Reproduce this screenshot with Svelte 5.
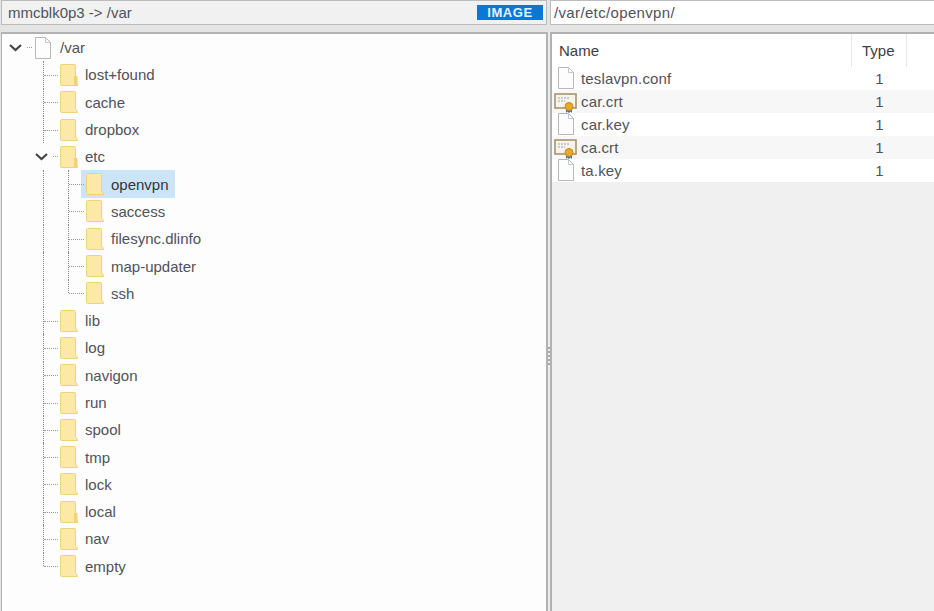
<script lang="ts">
	type Node = { name: string; depth: number; open?: boolean; tab?: boolean; selected?: boolean; last?: boolean; file?: boolean };

	const tree: Node[] = [
		{ name: '/var', depth: 0, open: true, file: true },
		{ name: 'lost+found', depth: 1, tab: true },
		{ name: 'cache', depth: 1 },
		{ name: 'dropbox', depth: 1 },
		{ name: 'etc', depth: 1, open: true, tab: true },
		{ name: 'openvpn', depth: 2, selected: true },
		{ name: 'saccess', depth: 2 },
		{ name: 'filesync.dlinfo', depth: 2 },
		{ name: 'map-updater', depth: 2 },
		{ name: 'ssh', depth: 2, last: true },
		{ name: 'lib', depth: 1 },
		{ name: 'log', depth: 1 },
		{ name: 'navigon', depth: 1 },
		{ name: 'run', depth: 1 },
		{ name: 'spool', depth: 1 },
		{ name: 'tmp', depth: 1 },
		{ name: 'lock', depth: 1 },
		{ name: 'local', depth: 1, tab: true },
		{ name: 'nav', depth: 1 },
		{ name: 'empty', depth: 1, last: true }
	];

	const files = [
		{ name: 'teslavpn.conf', cert: false },
		{ name: 'car.crt', cert: true },
		{ name: 'car.key', cert: false },
		{ name: 'ca.crt', cert: true },
		{ name: 'ta.key', cert: false }
	];
</script>

{#snippet pageIcon()}
	<svg class="page" width="18" height="22" viewBox="0 0 18 22">
		<path d="M1.5 0.5H11.5L16.5 5.5V21.5H1.5Z" fill="#fdfdfd" stroke="#b4b8bd" />
		<path d="M11.5 0.5V5.5H16.5" fill="none" stroke="#c4c7cb" />
	</svg>
{/snippet}

{#snippet chevron()}
	<svg width="15" height="9" viewBox="0 0 15 9"><path d="M2 2L7.5 7L13 2" fill="none" stroke="#444" stroke-width="2.2" /></svg>
{/snippet}

<div class="app">
	<div class="bars">
		<div class="bar">
			<span class="crumb">mmcblk0p3 -&gt; /var</span>
			<span class="badge">IMAGE</span>
		</div>
		<div class="bar path">/var/etc/openvpn/</div>
	</div>

	<div class="panes">
		<div class="tree">
			{#each tree as node}
				<div class="row">
					{#if node.depth === 0}
						<span class="cell chev-root">{@render chevron()}</span>
						<span class="stub"></span>
					{:else}
						{#if node.depth === 2}
							<span class="guide trunk"></span>
						{/if}
						{#if node.open}
							<span class="cell chev-child">{@render chevron()}</span>
							<span class="stub"></span>
						{:else}
							<span class="guide" class:first={node.depth === 1} class:second={node.depth === 2} class:last={node.last}></span>
						{/if}
					{/if}
					<span class="name" class:selected={node.selected}>
						{#if node.file}
							{@render pageIcon()}
						{:else}
							<svg class="folder" width="18" height="22" viewBox="0 0 18 22">
								<path d="M0.5 1.5Q0.5 0.5 1.5 0.5H14.5Q15.5 0.5 15.5 1.5V18Q17.5 19.5 17.5 21.5H1.5Q0.5 21.5 0.5 20.5Z" fill="#fde9a6" stroke="#efd27e" />
								{#if node.tab}
									<path d="M14 12H17.5V21.5H14Z" fill="#f3d277" />
								{/if}
							</svg>
						{/if}
						<span class="label" class:root={node.file}>{node.name}</span>
					</span>
				</div>
			{/each}
		</div>

		<div class="splitter"><span class="grip"></span></div>

		<div class="list">
			<div class="head">
				<span class="col-name">Name</span>
				<span class="col-type">Type</span>
				<span class="col-rest"></span>
			</div>
			{#each files as file, i}
				<div class="file" class:alt={i % 2 === 1}>
					<span class="file-name">
						{#if file.cert}
							<svg class="cert" width="24" height="22" viewBox="0 0 24 22">
								<rect x="1" y="3" width="21" height="14" fill="#f6f3ea" stroke="#a8936a" stroke-width="1.6" />
								<path d="M4 7H16M4 10H11" stroke="#8fa6c8" stroke-dasharray="2 1" />
								<path d="M12 18H18V22L16.5 20.5L15 22L13.5 20.5L12 22Z" fill="#3f6fb5" />
								<circle cx="15" cy="15.5" r="4" fill="#eaa82a" stroke="#c98a17" />
							</svg>
						{:else}
							{@render pageIcon()}
						{/if}
						<span class="file-label">{file.name}</span>
					</span>
					<span class="file-type">1</span>
				</div>
			{/each}
		</div>
	</div>
</div>

<style>
	:global(body) {
		margin: 0;
		background: #e4e4e4;
	}

	.app {
		width: 934px;
		height: 611px;
		overflow: hidden;
		display: flex;
		flex-direction: column;
		font-family: "Liberation Sans", Arial, sans-serif;
		font-size: 15px;
		color: #50525a;
	}

	.bars {
		display: grid;
		grid-template-columns: 546px 1fr;
		gap: 3px;
		height: 32px;
		padding-left: 1px;
		box-sizing: border-box;
	}

	.bar {
		height: 25px;
		box-sizing: border-box;
		border: 1px solid #bcbcbc;
		background: #f1f1f1;
		display: flex;
		align-items: center;
		justify-content: space-between;
		padding: 0 3px 0 6px;
	}

	.bar.path {
		background: #fff;
		border-right: 0;
		justify-content: flex-start;
		padding-left: 3px;
		letter-spacing: 0.35px;
	}

	.badge {
		width: 66px;
		height: 15px;
		background: #0a78d7;
		color: #e8f3fc;
		font-size: 13px;
		font-weight: 700;
		letter-spacing: 0.6px;
		line-height: 15px;
		text-align: center;
	}

	.panes {
		flex: 1;
		display: flex;
		padding-left: 1px;
	}

	.tree {
		width: 547px;
		box-sizing: border-box;
		background: #fdfdfd;
		border: 2px solid #b2b2b2;
		border-bottom: 0;
		border-left-width: 1px;
	}

	.row {
		height: 27.3px;
		display: flex;
		align-items: center;
		position: relative;
	}

	.cell {
		display: flex;
		align-items: center;
		justify-content: center;
	}

	.chev-root {
		width: 15px;
		margin-left: 6px;
	}

	.chev-child {
		width: 15px;
		margin-left: 32px;
	}

	.stub {
		width: 5px;
		margin-left: 4px;
		border-top: 1px dotted #999;
	}

	.guide {
		align-self: stretch;
		width: 15px;
		box-sizing: border-box;
		border-left: 1px dotted #888;
		position: relative;
	}

	.guide::after {
		content: '';
		position: absolute;
		left: 0;
		right: 0;
		top: 50%;
		border-top: 1px dotted #999;
	}

	.guide.first {
		margin-left: 41px;
	}

	.guide.second {
		margin-left: 24px;
		width: 16px;
	}

	.guide.trunk {
		margin-left: 41px;
		width: 0;
	}

	.guide.trunk::after {
		display: none;
	}

	.guide.last {
		align-self: flex-start;
		height: 50%;
	}

	.guide.last::after {
		top: 100%;
	}

	.name {
		display: flex;
		align-items: center;
		height: 100%;
	}

	.name.selected {
		background: #cce4f7;
		margin-left: -3px;
		padding: 0 6px 0 3px;
		color: #33363d;
	}

	.folder {
		flex: none;
		margin-left: 2px;
	}

	.page {
		flex: none;
	}

	.name .page {
		margin-left: 2px;
	}

	.label {
		margin-left: 7px;
		white-space: nowrap;
	}

	.label.root {
		margin-left: 8px;
	}

	.splitter {
		width: 2px;
		background: #ececec;
		display: flex;
		align-items: center;
		justify-content: center;
	}

	.grip {
		width: 2px;
		height: 18px;
		margin-top: 68px;
		background: repeating-linear-gradient(#aaa 0 2px, transparent 2px 4px);
	}

	.list {
		flex: 1;
		background: #f0f0f0;
		border-left: 2px solid #b2b2b2;
		border-top: 2px solid #b2b2b2;
	}

	.head {
		display: grid;
		grid-template-columns: 300px 55px 1fr;
		height: 33px;
		background: #fff;
		line-height: 33px;
		color: #3c3e44;
	}

	.col-name {
		padding-left: 7px;
		border-right: 1px solid #e6e6e6;
	}

	.col-type {
		padding-left: 10px;
		border-right: 1px solid #e6e6e6;
	}

	.file {
		display: grid;
		grid-template-columns: 300px 55px 1fr;
		height: 23px;
		background: #fff;
		align-items: center;
	}

	.file.alt {
		background: #f7f7f7;
	}

	.file-name {
		display: flex;
		align-items: center;
		height: 23px;
		padding-left: 4px;
	}

	.file .page {
		margin: 0 0 2px 1px;
	}

	.cert {
		flex: none;
		margin-left: -2px;
	}

	.file-label {
		margin-left: 6px;
		letter-spacing: 0.15px;
	}

	.cert + .file-label {
		margin-left: 3px;
	}

	.file-type {
		text-align: center;
	}
</style>
